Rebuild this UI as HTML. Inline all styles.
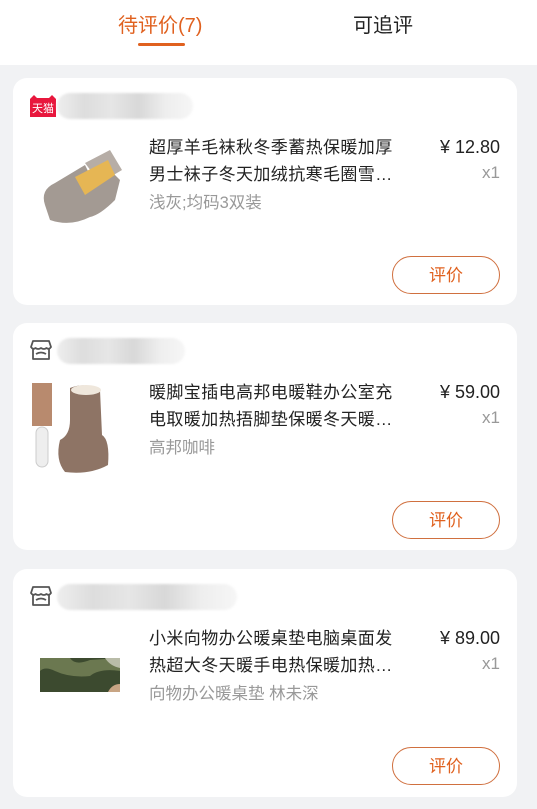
<!DOCTYPE html>
<html><head><meta charset="utf-8">
<style>
*{margin:0;padding:0;box-sizing:border-box}
body{width:537px;height:809px;background:#f1f2f4;font-family:"Liberation Sans","Noto Sans CJK SC",sans-serif;position:relative;overflow:hidden}
.hdr{position:absolute;left:0;top:0;width:537px;height:65px;background:#fff}
.tab{position:absolute;top:12px;font-size:20px;line-height:28px}
.t1{left:118px;color:#e0611f}
.t2{left:353px;color:#222}
.ul{position:absolute;left:138px;top:43px;width:47px;height:3px;background:#e0611f;border-radius:2px}
.card{position:absolute;left:13px;width:504px;height:227px;background:#fff;border-radius:14px}
.shop{position:absolute;left:17px;top:16px;width:22px;height:22px}
.blur{position:absolute;left:44px;top:15px;height:26px;border-radius:13px;background:linear-gradient(90deg,#eee,#ddd 20%,#e6e6e6 40%,#d8d8d8 60%,#eee 80%,#f6f6f6);filter:blur(1px)}
.img{position:absolute;left:17px;top:57px;width:100px;height:100px}
.title{position:absolute;left:136px;top:56px;width:256px;font-size:17px;line-height:27px;color:#222;letter-spacing:0.4px}
.spec{position:absolute;left:136px;top:112px;font-size:16.5px;line-height:27px;color:#999}
.price{position:absolute;right:17px;top:56px;font-size:18px;line-height:27px;color:#222}
.qty{position:absolute;right:17px;top:81px;font-size:17px;line-height:27px;color:#999}
.btn{position:absolute;left:379px;top:178px;width:108px;height:38px;border:1px solid #d0703f;border-radius:19px;color:#e0611f;font-size:17px;line-height:38px;text-align:center}
</style></head><body>
<div class="hdr">
<div class="tab t1">待评价(7)</div>
<div class="tab t2">可追评</div>
<div class="ul"></div>
</div>

<div class="card" style="top:78px">
<svg class="shop" viewBox="0 0 26 22" style="left:17px;top:17px;width:26px;height:22px"><path d="M0 4 L4 0 L7 3 L19 3 L22 0 L26 4 L26 22 L0 22Z" fill="#e8173d"/><text x="13" y="17" font-size="11" fill="#fff" text-anchor="middle" font-family="Noto Sans CJK SC">天猫</text></svg>
<div class="blur" style="width:136px;left:44px"></div>
<svg class="img" viewBox="0 0 100 100"><rect width="100" height="100" fill="#fff"/><path d="M15 70 Q10 55 25 48 L55 30 L60 40 L75 30 L90 45 L85 65 Q70 80 60 82 Q40 92 20 85Z" fill="#a39a93"/><path d="M55 28 L80 15 L92 35 L70 48Z" fill="#b6ada6"/><path d="M45 42 L78 25 L85 40 L55 60Z" fill="#e6b654"/></svg>
<div class="title">超厚羊毛袜秋冬季蓄热保暖加厚<br>男士袜子冬天加绒抗寒毛圈雪…</div>
<div class="spec">浅灰;均码3双装</div>
<div class="price">¥ 12.80</div>
<div class="qty">x1</div>
<div class="btn">评价</div>
</div>

<div class="card" style="top:323px">
<svg class="shop" viewBox="0 0 22 22"><path d="M3 2 H19 L21 8 Q19 11 16.5 9 Q14 11 11 9 Q8 11 5.5 9 Q3 11 1 8Z M3 10 V20 H19 V10 M6 15 Q11 12 16 15" fill="none" stroke="#555" stroke-width="1.8" stroke-linejoin="round"/></svg>
<div class="blur" style="width:128px"></div>
<svg class="img" viewBox="0 0 100 100"><rect width="100" height="100" fill="#fff"/><rect x="2" y="3" width="20" height="43" fill="#b88a6e"/><rect x="6" y="47" width="12" height="40" rx="6" fill="#eee" stroke="#ccc"/><path d="M40 8 Q55 2 70 10 L72 55 Q80 60 78 85 Q60 95 35 92 Q25 80 30 60 Q40 55 40 40Z" fill="#8e7465"/><ellipse cx="56" cy="10" rx="15" ry="5" fill="#efe7dc"/></svg>
<div class="title">暖脚宝插电高邦电暖鞋办公室充<br>电取暖加热捂脚垫保暖冬天暖…</div>
<div class="spec">高邦咖啡</div>
<div class="price">¥ 59.00</div>
<div class="qty">x1</div>
<div class="btn">评价</div>
</div>

<div class="card" style="top:569px;height:228px">
<svg class="shop" viewBox="0 0 22 22"><path d="M3 2 H19 L21 8 Q19 11 16.5 9 Q14 11 11 9 Q8 11 5.5 9 Q3 11 1 8Z M3 10 V20 H19 V10 M6 15 Q11 12 16 15" fill="none" stroke="#555" stroke-width="1.8" stroke-linejoin="round"/></svg>
<div class="blur" style="width:180px"></div>
<svg class="img" viewBox="0 0 100 100"><rect width="100" height="100" fill="#fff"/><rect x="10" y="32" width="80" height="34" fill="#3c4a2f"/><path d="M10 32 H40 Q45 40 60 34 L90 32 V45 Q70 42 60 50 Q40 52 25 45 Q15 40 10 45Z" fill="#6b7850"/><path d="M75 32 H90 V42 Q80 40 75 32Z" fill="#b9bca8"/><path d="M78 66 Q82 58 90 58 V66Z" fill="#c8a584"/></svg>
<div class="title">小米向物办公暖桌垫电脑桌面发<br>热超大冬天暖手电热保暖加热…</div>
<div class="spec">向物办公暖桌垫 林未深</div>
<div class="price">¥ 89.00</div>
<div class="qty">x1</div>
<div class="btn">评价</div>
</div>
</body></html>
